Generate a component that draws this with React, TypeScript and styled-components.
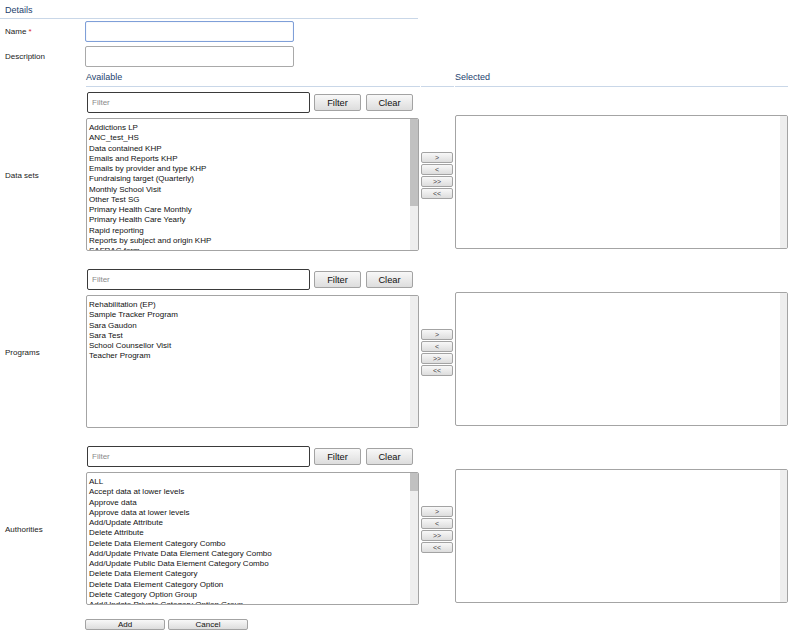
import { ReactElement } from 'react';

import styled, { createGlobalStyle } from 'styled-components';

interface IPicker {
  label: string;
  items: string[];
  thumb?: number;
}

const pickers: IPicker[] = [
  {
    label: 'Data sets',
    thumb: 87,
    items: [
      'Addictions LP',
      'ANC_test_HS',
      'Data contained KHP',
      'Emails and Reports KHP',
      'Emails by provider and type KHP',
      'Fundraising target (Quarterly)',
      'Monthly School Visit',
      'Other Test SG',
      'Primary Health Care Monthly',
      'Primary Health Care Yearly',
      'Rapid reporting',
      'Reports by subject and origin KHP',
      'SAFRAC form',
    ],
  },
  {
    label: 'Programs',
    items: [
      'Rehabilitation (EP)',
      'Sample Tracker Program',
      'Sara Gaudon',
      'Sara Test',
      'School Counsellor Visit',
      'Teacher Program',
    ],
  },
  {
    label: 'Authorities',
    thumb: 18,
    items: [
      'ALL',
      'Accept data at lower levels',
      'Approve data',
      'Approve data at lower levels',
      'Add/Update Attribute',
      'Delete Attribute',
      'Delete Data Element Category Combo',
      'Add/Update Private Data Element Category Combo',
      'Add/Update Public Data Element Category Combo',
      'Delete Data Element Category',
      'Delete Data Element Category Option',
      'Delete Category Option Group',
      'Add/Update Private Category Option Group',
    ],
  },
];

const moves = ['>', '<', '>>', '<<'];

function Picker({ label, items, thumb }: IPicker): ReactElement {
  return (
    <FormGrid $spacing={18}>
      <PickerLabel>{label}</PickerLabel>
      <AvailableCell>
        <FilterRow>
          <FilterInput placeholder="Filter" />
          <SmallButton>Filter</SmallButton>
          <SmallButton>Clear</SmallButton>
        </FilterRow>
        <ListBox>
          <Options>
            {items.map((item) => (
              <Option key={item}>{item}</Option>
            ))}
          </Options>
          <ScrollTrack>{thumb ? <Thumb $size={thumb} /> : null}</ScrollTrack>
        </ListBox>
      </AvailableCell>
      <MoveButtons>
        {moves.map((m) => (
          <MoveButton key={m}>{m}</MoveButton>
        ))}
      </MoveButtons>
      <SelectedBox>
        <Options />
        <ScrollTrack $narrow />
      </SelectedBox>
    </FormGrid>
  );
}

export default function App(): ReactElement {
  return (
    <>
      <GlobalStyle />
      <Page>
        <SectionTitle>Details</SectionTitle>
        <FieldRow>
          <FieldLabel>
            Name <Required>*</Required>
          </FieldLabel>
          <TextInput $focused />
        </FieldRow>
        <FieldRow>
          <FieldLabel>Description</FieldLabel>
          <TextInput />
        </FieldRow>
        <FormGrid $spacing={0}>
          <span />
          <ColumnHead>Available</ColumnHead>
          <ColumnHead />
          <ColumnHead>Selected</ColumnHead>
        </FormGrid>
        <PickerStack>
          {pickers.map((p) => (
            <Picker key={p.label} {...p} />
          ))}
        </PickerStack>
        <Actions>
          <ActionButton>Add</ActionButton>
          <ActionButton>Cancel</ActionButton>
        </Actions>
      </Page>
    </>
  );
}

const GlobalStyle = createGlobalStyle`
  body {
    margin: 0;
    background: #fff;
    font-family: "Liberation Sans", Arial, sans-serif;
    font-size: 8px;
    color: #222;
  }
`;

const Page = styled.div`
  width: 796px;
  display: flex;
  flex-direction: column;
`;

const SectionTitle = styled.div`
  width: 413px;
  height: 15px;
  padding: 3px 0 0 5px;
  line-height: 15px;
  font-size: 9px;
  color: #243f6e;
  border-bottom: 1px solid #c9d7e8;
`;

const FieldRow = styled.div`
  display: flex;
  align-items: center;
  margin-top: 2px;

  & + & {
    margin-top: 4px;
  }
`;

const FieldLabel = styled.label`
  width: 80px;
  padding-left: 5px;
`;

const Required = styled.span`
  color: #d22;
`;

const TextInput = styled.input<{ $focused?: boolean }>`
  box-sizing: border-box;
  width: 209px;
  height: 21px;
  border: 1px solid ${(p) => (p.$focused ? '#7f9fd8' : '#a9a9a9')};
  border-radius: 2px;
  box-shadow: ${(p) => (p.$focused ? 'inset 0 0 1px #a9c0e8' : 'none')};
  outline: none;
  background: #fff;
`;

const FormGrid = styled.div<{ $spacing: number }>`
  display: grid;
  grid-template-columns: 85px 334px 33px 333px;
  column-gap: 1px;
  margin-top: ${(p) => p.$spacing}px;
`;

const ColumnHead = styled.div`
  height: 17px;
  padding-top: 2px;
  line-height: 17px;
  font-size: 9px;
  color: #243f6e;
  border-bottom: 1px solid #c9d7e8;
`;

const PickerStack = styled.div`
  margin-top: 5px;

  & > div:first-child {
    margin-top: 0;
  }
`;

const PickerLabel = styled.div`
  align-self: center;
  padding: 8px 0 0 5px;
`;

const AvailableCell = styled.div`
  display: flex;
  flex-direction: column;
  gap: 5px;
`;

const FilterRow = styled.div`
  display: flex;
  align-items: center;
  height: 21px;
`;

const FilterInput = styled.input`
  box-sizing: border-box;
  width: 223px;
  height: 21px;
  margin: 0 4px 0 1px;
  padding: 0 4px;
  border: 1px solid #3a3a3a;
  border-radius: 2px;
  font-family: inherit;
  font-size: 8px;
  outline: none;

  &::placeholder {
    color: #8a8a8a;
  }
`;

const ButtonBase = styled.button`
  box-sizing: border-box;
  padding: 0;
  border: 1px solid #a3a3a3;
  border-radius: 2px;
  background: linear-gradient(#f8f8f8, #dddddd);
  font-family: inherit;
  color: #111;
  cursor: pointer;
`;

const SmallButton = styled(ButtonBase)`
  width: 47px;
  height: 17px;
  font-size: 9.3px;
  margin-right: 5px;
`;

const ListBox = styled.div`
  box-sizing: border-box;
  display: flex;
  width: 333px;
  height: 133px;
  border: 1px solid #a4a4a4;
  border-radius: 2px;
  overflow: hidden;
`;

const SelectedBox = styled(ListBox)`
  margin-top: 23px;
  height: 134px;
`;

const Options = styled.div`
  flex: 1;
  padding: 4px 2px 2px;
  overflow: hidden;
`;

const Option = styled.div`
  line-height: 10.27px;
  white-space: nowrap;
  color: #111;
`;

const ScrollTrack = styled.div<{ $narrow?: boolean }>`
  width: ${(p) => (p.$narrow ? 7 : 8)}px;
  background: #eeeeee;
`;

const Thumb = styled.div<{ $size: number }>`
  height: ${(p) => p.$size}px;
  background: #c1c1c1;
`;

const MoveButtons = styled.div`
  display: flex;
  flex-direction: column;
  gap: 1px;
  margin-top: 60px;
`;

const MoveButton = styled(ButtonBase)`
  width: 32px;
  height: 11px;
  font-size: 7px;
  line-height: 9px;
  color: #444;
`;

const Actions = styled.div`
  display: flex;
  gap: 3px;
  margin: 14px 0 0 85px;
`;

const ActionButton = styled(ButtonBase)`
  width: 80px;
  height: 11px;
  font-size: 8px;
  line-height: 9px;
`;
